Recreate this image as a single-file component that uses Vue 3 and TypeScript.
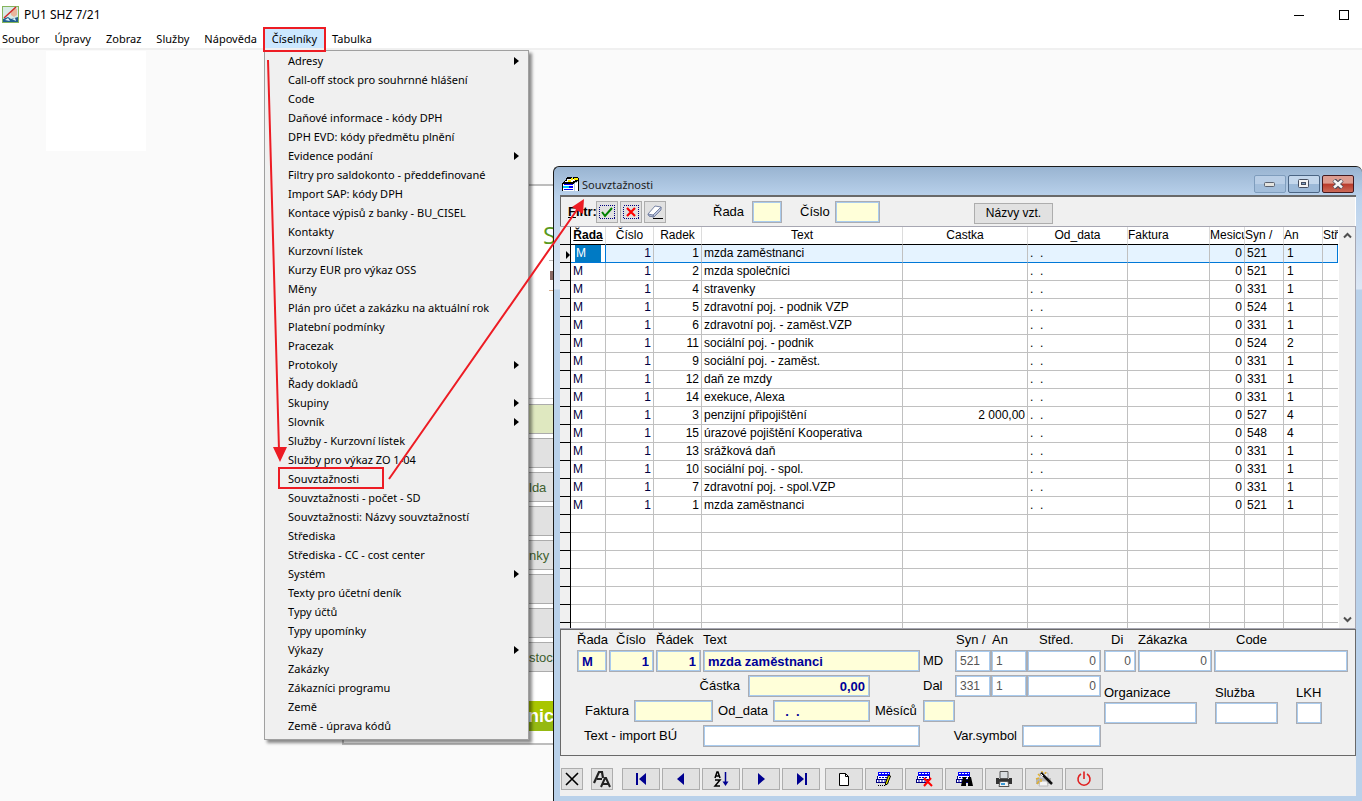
<script setup lang="ts">
import { ref } from 'vue'

interface MenuEntry { label: string; sub?: boolean }
interface Row { line: number; text: string; amount?: string; syn: string; an: string }

const menuBar: string[] = ['Soubor', 'Úpravy', 'Zobraz', 'Služby', 'Nápověda', 'Číselníky', 'Tabulka']
const openMenu = ref('Číselníky')

const entries: MenuEntry[] = [
  { label: 'Adresy', sub: true },
  { label: 'Call-off stock pro souhrnné hlášení' },
  { label: 'Code' },
  { label: 'Daňové informace - kódy DPH' },
  { label: 'DPH EVD: kódy předmětu plnění' },
  { label: 'Evidence podání', sub: true },
  { label: 'Filtry pro saldokonto - předdefinované' },
  { label: 'Import SAP: kódy DPH' },
  { label: 'Kontace výpisů z banky - BU_CISEL' },
  { label: 'Kontakty' },
  { label: 'Kurzovní lístek' },
  { label: 'Kurzy EUR pro výkaz OSS' },
  { label: 'Měny' },
  { label: 'Plán pro účet a zakázku na aktuální rok' },
  { label: 'Platební podmínky' },
  { label: 'Pracezak' },
  { label: 'Protokoly', sub: true },
  { label: 'Řady dokladů' },
  { label: 'Skupiny', sub: true },
  { label: 'Slovník', sub: true },
  { label: 'Služby - Kurzovní lístek' },
  { label: 'Služby pro výkaz ZO 1-04' },
  { label: 'Souvztažnosti' },
  { label: 'Souvztažnosti - počet - SD' },
  { label: 'Souvztažnosti: Názvy souvztažností' },
  { label: 'Střediska' },
  { label: 'Střediska - CC - cost center' },
  { label: 'Systém', sub: true },
  { label: 'Texty pro účetní deník' },
  { label: 'Typy účtů' },
  { label: 'Typy upomínky' },
  { label: 'Výkazy', sub: true },
  { label: 'Zakázky' },
  { label: 'Zákazníci programu' },
  { label: 'Země' },
  { label: 'Země - úprava kódů' },
]

const rows: Row[] = [
  { line: 1, text: 'mzda zaměstnanci', syn: '521', an: '1' },
  { line: 2, text: 'mzda společníci', syn: '521', an: '1' },
  { line: 4, text: 'stravenky', syn: '331', an: '1' },
  { line: 5, text: 'zdravotní poj. - podnik VZP', syn: '524', an: '1' },
  { line: 6, text: 'zdravotní poj. - zaměst.VZP', syn: '331', an: '1' },
  { line: 11, text: 'sociální poj. - podnik', syn: '524', an: '2' },
  { line: 9, text: 'sociální poj. - zaměst.', syn: '331', an: '1' },
  { line: 12, text: 'daň ze mzdy', syn: '331', an: '1' },
  { line: 14, text: 'exekuce, Alexa', syn: '331', an: '1' },
  { line: 3, text: 'penzijní připojištění', amount: '2 000,00', syn: '527', an: '4' },
  { line: 15, text: 'úrazové pojištění Kooperativa', syn: '548', an: '4' },
  { line: 13, text: 'srážková daň', syn: '331', an: '1' },
  { line: 10, text: 'sociální poj. - spol.', syn: '331', an: '1' },
  { line: 7, text: 'zdravotní poj. - spol.VZP', syn: '331', an: '1' },
  { line: 1, text: 'mzda zaměstnanci', syn: '521', an: '1' },
]
const blankRows = 7

const backButtons: string[] = ['', '', 'lda', '', 'nky', '', '', 'stoc']
</script>

<template>
  <div class="app">
    <header class="titlebar">
      <svg class="app-icon" width="17" height="17" viewBox="0 0 17 17" aria-hidden="true">
        <rect x="0.5" y="0.5" width="16" height="16" fill="#d7ebe6" stroke="#86b45c" />
        <path d="M1 13l5-2 3 2 7-2v5H1z" fill="#1f5f8f" />
        <path d="M9 5l3-3 3 1v6l-3 2-3-2z" fill="#e8b69c" />
        <path d="M3 14l3-2 2 3zM10 13l3-1 1 3z" fill="#e9f6fb" />
        <path d="M2 12L14 1" stroke="#cf2a2a" stroke-width="1.5" />
      </svg>
      <span class="app-name">PU1 SHZ 7/21</span>
      <button class="sys" type="button" aria-label="Minimalizovat">
        <svg width="10" height="10" viewBox="0 0 10 10"><path d="M0 5.5h10" stroke="#000" /></svg>
      </button>
      <button class="sys" type="button" aria-label="Maximalizovat">
        <svg width="10" height="10" viewBox="0 0 10 10"><rect x="0.5" y="0.5" width="9" height="9" fill="none" stroke="#000" /></svg>
      </button>
    </header>
    <nav class="menubar">
      <button v-for="m in menuBar" :key="m" type="button" :class="{ open: m === openMenu }" @click="openMenu = m">{{ m }}</button>
    </nav>

    <main class="desktop">
      <div class="blank"></div>

      <section class="back">
        <div class="back-head"><span class="back-title">S</span><span class="dash"></span><span class="chip"></span><span class="dash tan"></span></div>
        <div class="back-list">
          <button v-for="(b, i) in backButtons" :key="i" type="button" :class="{ first: i === 0 }">{{ b }}</button>
        </div>
        <div class="banner">nict</div>
      </section>

      <ul v-if="openMenu === 'Číselníky'" class="menu" role="menu">
        <li v-for="e in entries" :key="e.label" role="menuitem">
          <span>{{ e.label }}</span>
          <svg v-if="e.sub" width="5" height="8" viewBox="0 0 5 8" aria-hidden="true"><path d="M0 0l5 4-5 4z" fill="#000" /></svg>
        </li>
      </ul>

      <section class="win">
        <div class="win-title">
          <svg width="17" height="16" viewBox="0 0 17 16" aria-hidden="true" shape-rendering="crispEdges">
            <path d="M0 7h1V6h1V5h1V4h1V2h1V1h5v1h1V1h5v1h1v13h-1V5h-1v1h-2v1h-1v8H0z" fill="#000" />
            <path d="M3 5h2V3h10v1h-2v1h-2v1H3z" fill="#fff" />
            <path d="M6 4h3v2H6zM9 2h2v2H9zM12 2h4v2h-4z" fill="#ffee00" />
            <path d="M1 8h11v7H1zM13 7h2V6h1v9h-3z" fill="#fff" />
            <path d="M2 8h9v1H2zM2 13h9v1H2z" fill="#0000ff" />
            <path d="M1 10h6v2H1z" fill="#00c8ff" />
            <path d="M7 10h4v2H7z" fill="#0000ff" />
          </svg>
          <span class="win-name">Souvztažnosti</span>
          <button class="wb" type="button" aria-label="Minimalizovat okno">
            <svg width="12" height="6" viewBox="0 0 12 6"><rect x="0.5" y="1.5" width="10" height="4" rx="1" fill="#e4e4e0" stroke="#5b6270" /></svg>
          </button>
          <button class="wb strong" type="button" aria-label="Maximalizovat okno">
            <svg width="12" height="10" viewBox="0 0 12 10"><rect x="0.5" y="0.5" width="10" height="8" rx="1" fill="#f4f4f4" stroke="#464e60" /><rect x="3.5" y="3.5" width="4" height="2" fill="#7fa0c4" stroke="#464e60" /></svg>
          </button>
          <button class="wb close" type="button" aria-label="Zavřít okno">
            <svg width="12" height="10" viewBox="0 0 12 10"><path d="M2 1l8 8M10 1l-8 8" stroke="#4a4a58" stroke-width="4.500" /><path d="M2 1.500l8 7M10 1.500l-8 7" stroke="#f6f6f6" stroke-width="2.500" /></svg>
          </button>
        </div>

        <div class="win-body">
          <div class="filter">
            <strong class="flt"><u>F</u>iltr:</strong>
            <button class="sq" type="button" aria-label="Použít filtr">
              <svg width="16" height="16" viewBox="0 0 16 16"><rect x="0.5" y="1.500" width="15" height="13" fill="none" stroke="#000080" stroke-dasharray="1 1" shape-rendering="crispEdges" /><path d="M3 8l3 4 7-8" fill="none" stroke="#008000" stroke-width="2" /></svg>
            </button>
            <button class="sq" type="button" aria-label="Zrušit filtr">
              <svg width="16" height="16" viewBox="0 0 16 16"><rect x="0.5" y="1.500" width="15" height="13" fill="none" stroke="#000080" stroke-dasharray="1 1" shape-rendering="crispEdges" /><path d="M4 4l8 8M12 4l-8 8" stroke="#ff0000" stroke-width="2.200" /></svg>
            </button>
            <button class="sq" type="button" aria-label="Vymazat filtr">
              <svg width="18" height="16" viewBox="0 0 18 16"><path d="M2 10l7-8 6 1-1 4-6 6-5-1z" fill="#fff" stroke="#7884a4" /><path d="M2 10l5 1 1 2-5-1zM7 11l8-8v3l-7 7z" fill="#b8c2dc" stroke="#7884a4" /><path d="M7 14.500h10" stroke="#000" /></svg>
            </button>
            <label class="f-rada" for="f-rada">Řada</label><input id="f-rada" class="in y w30">
            <label class="f-cislo" for="f-cislo">Číslo</label><input id="f-cislo" class="in y w45">
            <button class="names" type="button">Názvy vzt.</button>
          </div>

          <div class="grid">
            <table>
              <colgroup>
                <col class="c-ind"><col class="c-rada"><col class="c-48"><col class="c-48"><col>
                <col class="c-castka"><col class="c-od"><col class="c-fak"><col class="c-mes"><col class="c-39"><col class="c-39"><col class="c-str">
              </colgroup>
              <thead>
                <tr>
                  <th class="ind"></th><th class="sorted">Řada</th><th>Číslo</th><th>Radek</th><th>Text</th><th>Castka</th><th>Od_data</th>
                  <th class="l">Faktura</th><th class="l">Mesicu</th><th class="l">Syn /</th><th class="l">An</th><th class="l">Stř.</th>
                </tr>
              </thead>
              <tbody>
                <tr v-for="(r, i) in rows" :key="i" :class="{ cur: i === 0 }">
                  <td class="ind"><svg v-if="i === 0" width="4" height="8" viewBox="0 0 4 8"><path d="M0 0l4 4-4 4z" fill="#000" /></svg></td>
                  <td class="navy"><span>M</span></td>
                  <td class="r navy">1</td>
                  <td class="r">{{ r.line }}</td>
                  <td>{{ r.text }}</td>
                  <td class="r">{{ r.amount }}</td>
                  <td class="date">.&nbsp; .</td>
                  <td></td>
                  <td class="r">0</td>
                  <td>{{ r.syn }}</td>
                  <td class="an">{{ r.an }}</td>
                  <td></td>
                </tr>
                <tr v-for="n in blankRows" :key="'b' + n"><td class="ind"></td><td v-for="c in 11" :key="c"></td></tr>
              </tbody>
            </table>
            <div class="scroll">
              <button type="button" aria-label="Nahoru"><svg width="9" height="7" viewBox="0 0 9 7"><path d="M1 5.500l3.500-3.500 3.500 3.500" fill="none" stroke="#505050" stroke-width="2" /></svg></button>
              <button type="button" aria-label="Dolů"><svg width="9" height="7" viewBox="0 0 9 7"><path d="M1 1.500l3.500 3.500 3.500-3.500" fill="none" stroke="#505050" stroke-width="2" /></svg></button>
            </div>
          </div>

          <form class="form" @submit.prevent>
            <div class="part">
              <div class="line heads">
                <label class="w30" for="i-rada">Řada</label><label class="w45 pad" for="i-cislo">Číslo</label><label class="w45" for="i-radek">Řádek</label><label for="i-text">Text</label>
              </div>
              <div class="line">
                <input id="i-rada" class="in y w30" value="M"><input id="i-cislo" class="in y w45 right" value="1"><input id="i-radek" class="in y w45 right" value="1"><input id="i-text" class="in y w217" value="mzda zaměstnanci">
              </div>
              <div class="line amount">
                <label for="i-castka">Částka</label><input id="i-castka" class="in y w122 right" value="0,00">
              </div>
              <div class="line more">
                <label for="i-faktura">Faktura</label><input id="i-faktura" class="in y w79">
                <label for="i-od">Od_data</label><input id="i-od" class="in y w97" value="  .  .">
                <label for="i-mes">Měsíců</label>
              </div>
              <div class="line imp">
                <label for="i-import">Text - import BÚ</label><input id="i-import" class="in w217">
              </div>
            </div>

            <div class="part">
              <div class="line heads acc">
                <label class="syn" for="i-md-syn">Syn /</label><label class="w36" for="i-md-an">An</label><label class="str" for="i-md-str">Střed.</label>
              </div>
              <div class="line tight">
                <span class="side">MD</span><input id="i-md-syn" class="in w36" value="521"><input id="i-md-an" class="in w36" value="1"><input id="i-md-str" class="in w74 right" value="0">
              </div>
              <div class="line tight">
                <span class="side">Dal</span><input class="in w36" aria-label="Dal Syn" value="331"><input class="in w36" aria-label="Dal An" value="1"><input class="in w74 right" aria-label="Dal Střed." value="0">
              </div>
              <div class="line"><input id="i-mes" class="in y w32"></div>
              <div class="line end"><label for="i-var">Var.symbol</label><input id="i-var" class="in w79"></div>
            </div>

            <div class="part wide">
              <div class="line heads">
                <label class="w32 pad" for="i-di">Di</label><label class="w74" for="i-zak">Zákazka</label><label class="code" for="i-code">Code</label>
              </div>
              <div class="line">
                <input id="i-di" class="in w32 right" value="0"><input id="i-zak" class="in w74 right" value="0"><input id="i-code" class="in fill">
              </div>
              <div class="stack">
                <div><label for="i-org">Organizace</label><input id="i-org" class="in w93"></div>
                <div><label for="i-slu">Služba</label><input id="i-slu" class="in w63"></div>
                <div><label for="i-lkh">LKH</label><input id="i-lkh" class="in w26"></div>
              </div>
            </div>
          </form>

          <div class="tools">
            <div class="set spaced">
              <button class="sq" type="button" aria-label="Zavřít"><svg width="16" height="16" viewBox="0 0 16 16"><path d="M2 2l12 12M14 2L2 14" fill="none" stroke="#000" stroke-width="1.600" /></svg></button>
              <button class="sq" type="button" aria-label="Písmo"><svg width="18" height="18" viewBox="0 0 18 18"><path d="M1 13L6 2h3l1 6" fill="none" stroke="#222" stroke-width="2.200" /><path d="M4 9h5" stroke="#222" stroke-width="2" /><path d="M8 17l4-9h1l4 9M10 14h5" fill="none" stroke="#222" stroke-width="2" /></svg></button>
            </div>
            <div class="set">
              <button class="tb" type="button" aria-label="První"><svg width="16" height="16" viewBox="0 0 16 16"><path d="M3 2h2v12H3zM13 2v12L6 8z" fill="#000090" /></svg></button>
              <button class="tb" type="button" aria-label="Předchozí"><svg width="16" height="16" viewBox="0 0 16 16"><path d="M11 2v12L4 8z" fill="#000090" /></svg></button>
              <button class="tb" type="button" aria-label="Seřadit"><svg width="18" height="18" viewBox="0 0 18 18"><path d="M3 8l2-6h1l2 6M4 6h3M3 10h5L3 16h5" fill="none" stroke="#000" stroke-width="1.500" /><path d="M13.500 2v12" stroke="#000090" stroke-width="1.500" /><path d="M10.500 11.500h6l-3 4.500z" fill="#000090" /></svg></button>
              <button class="tb" type="button" aria-label="Další"><svg width="16" height="16" viewBox="0 0 16 16"><path d="M5 2v12l7-6z" fill="#000090" /></svg></button>
              <button class="tb" type="button" aria-label="Poslední"><svg width="16" height="16" viewBox="0 0 16 16"><path d="M12 2h2v12h-2zM4 2v12l7-6z" fill="#000090" /></svg></button>
            </div>
            <div class="set">
              <button class="tb" type="button" aria-label="Nový"><svg width="14" height="16" viewBox="0 0 14 16"><path d="M2.500 2.500h6l3 3v9h-9z" fill="#fff" stroke="#000" /><path d="M8.500 2.500v3h3" fill="none" stroke="#000" /></svg></button>
              <button v-for="k in ['Upravit', 'Smazat', 'Hledat']" :key="k" class="tb" type="button" :aria-label="k">
                <svg width="18" height="16" viewBox="0 0 18 16">
                  <path d="M3 1h12v4H3z" fill="#0000ff" /><path d="M4 2.500h10" stroke="#fff" stroke-dasharray="2 1" />
                  <path d="M3 5h12v6H3zM2 7h12v4H2z" fill="#fff" />
                  <path d="M2.500 5v3M14.500 5v3M1.500 8v3M13.500 8v3M2 8.500h12" stroke="#000080" />
                  <path d="M4 6.500h9M3 10h9" stroke="#0000b0" stroke-dasharray="2 1" /><path d="M1 11.500h12" stroke="#000080" />
                  <template v-if="k === 'Upravit'"><path d="M10.500 12l3-8 2 1-3 8-2 1z" fill="#e8e800" stroke="#000" /><path d="M3 14.500h8" stroke="#000" stroke-dasharray="1 1" /></template>
                  <path v-else-if="k === 'Smazat'" d="M9 7l8 8M16 7l-7 8" stroke="#ff0000" stroke-width="2" />
                  <path v-else d="M8 6h3v3h2V6h3l2 9h-5v-4h-2v4H6z" fill="#000" />
                </svg>
              </button>
              <button class="tb" type="button" aria-label="Tisk"><svg width="18" height="16" viewBox="0 0 18 16"><path d="M5 0.500h8v7H5z" fill="#d9dde0" stroke="#555" /><path d="M1 7h3v1h10V7h3v6H1z" fill="#333" /><path d="M5 10.500h8l1 5H4z" fill="#f2f2f2" stroke="#555" /><path d="M6 12h4v2H6z" fill="#3a9ad8" /></svg></button>
              <button class="tb" type="button" aria-label="Návrh tisku"><svg width="18" height="16" viewBox="0 0 18 16"><path d="M5 2h8v5H5z" fill="#eee" stroke="#bbb" /><path d="M1 7h15v6H1z" fill="#b4b4b4" /><path d="M5 10h7l1 5H4z" fill="#f5f5f5" stroke="#bbb" /><path d="M3 3l2 2M7 0v2M1 8l3-1M2 13l2-3M6 8v3M11 1l-1 2" stroke="#e0b030" stroke-width="1.500" /><path d="M6 2l11 11" stroke="#111" stroke-width="2.500" /><path d="M6 3l2 2" stroke="#fff" /></svg></button>
              <button class="tb" type="button" aria-label="Konec"><svg width="16" height="16" viewBox="0 0 16 16"><path d="M5 3a6 6 0 1 0 6 0M8 0.500V8" fill="none" stroke="#e02020" stroke-width="1.600" /></svg></button>
            </div>
          </div>
        </div>
      </section>
    </main>

    <svg class="notes" width="600" height="500" viewBox="0 0 600 500" aria-hidden="true">
      <g fill="none" stroke="#ed1c24" stroke-width="2">
        <rect x="264" y="28" width="61" height="23" />
        <rect x="279" y="468" width="104" height="20" />
        <path d="M268 60l11 390M389 479L579 207" />
      </g>
      <path d="M273 447h14l-7 15zM584 199l-12 8 11 7z" fill="#ed1c24" />
    </svg>
  </div>
</template>

<style>
body { margin: 0; }
</style>

<style scoped>
* { box-sizing: border-box; }
.app { position: relative; min-height: 100vh; display: flex; flex-direction: column; overflow: hidden; background: #fafafa; color: #000; font: 11px "Noto Sans", "Open Sans", sans-serif; }
button { font: inherit; color: inherit; padding: 0; margin: 0; border: 0; background: none; border-radius: 0; }
svg { display: block; flex: none; }

.titlebar { display: flex; align-items: center; height: 29px; padding: 0 13px 0 2px; background: #fff; }
.app-name { margin-left: 5px; flex: 1; font-size: 12px; }
.sys { width: 10px; height: 10px; margin-left: 35px; }
.menubar { display: flex; gap: 15px; height: 21px; padding-left: 2px; background: #fff; border-bottom: 2px solid #f0f0f0; }
.menubar button.open { background: #cce8ff; margin: 0 -7px; padding: 0 7px; }

.desktop { position: relative; flex: 1; }
.blank { width: 100px; height: 100px; margin: 1px 0 0 46px; background: #fff; }

.back { position: absolute; left: 342px; right: 200px; top: 134px; height: 561px; background: #fff; border: 2px solid #bdbdbd; padding: 0 6px 0 184px; }
.back-head { display: flex; flex-direction: column; align-items: flex-start; gap: 10px; height: 213px; padding: 34px 0 0 15px; border-bottom: 1px solid #ccc; }
.back-title { font: 24px/30px "Open Sans", sans-serif; color: #5a9a1e; }
.dash { width: 20px; height: 1px; margin-left: 6px; background: #bbb; }
.chip { width: 20px; height: 9px; margin-left: 7px; background: #8a6a64; }
.dash.tan { background: #d8b090; }
.back-list { display: flex; flex-direction: column; gap: 4px; padding-top: 5px; }
.back-list button { height: 30px; border: 1px solid #acacac; background: #e1e1e1; text-align: left; color: #40602f; font: 13px "Liberation Sans", sans-serif; }
.back-list button.first { background: #dfe8c0; }
.banner { margin-top: 29px; height: 30px; background: linear-gradient(#a9c600 50%, #95b912 50%); color: #fff; font: bold 18px/30px "Liberation Sans", sans-serif; }

.menu { position: absolute; left: 264px; top: 0; width: 265px; margin: 0; padding: 0 9px 4px 23px; list-style: none; background: #f0f0f0; border: 1px solid #a0a0a0; box-shadow: 3px 3px 3px rgba(0, 0, 0, 0.45); }
.menu li { display: flex; align-items: center; justify-content: space-between; height: 19px; }

.win { position: absolute; left: 553px; right: 0; top: 116px; bottom: 0; display: flex; flex-direction: column; padding: 0 6px 5px; border: solid #1a1a1a; border-width: 1px 0 0 1px; border-radius: 6px 6px 0 0; background: linear-gradient(#99b4d1, #bad2ec 30px, #dce7f5 122px, #b9d1ea 123px); }
.win-title { display: flex; align-items: center; height: 28px; gap: 2px; padding: 6px 2px 0 2px; color: #222; }
.win-name { flex: 1; padding-left: 1px; }
.wb { display: flex; align-items: center; justify-content: center; width: 32px; height: 18px; border: 1px solid #7f9dbd; border-radius: 2px; background: linear-gradient(#b9cee6 50%, #a3bedb 50%); }
.wb.strong { border-color: #4b6584; background: linear-gradient(#c4d7ec 50%, #9cb9d8 50%); }
.wb.close { border-color: #431a20; background: linear-gradient(#dd9c90 45%, #b8392a 50%, #cc6a58); }

.win-body { flex: 1; min-height: 0; display: flex; flex-direction: column; border-top: 2px solid #696969; background: #f0f0f0; font: 13px "Liberation Sans", Arial, sans-serif; }
.filter { display: flex; align-items: center; gap: 2px; height: 29px; padding-left: 7px; border-left: 1px solid #696969; border-right: 1px solid #fff; }
.flt { width: 26px; }
.sq { display: flex; align-items: center; justify-content: center; width: 22px; height: 22px; border: 1px solid #adadad; background: #e1e1e1; }
.in { height: 22px; margin: 0; padding: 0 4px; border: 1px solid #abadb3; box-shadow: inset 0 0 0 1px #a9cbee; background: #fff; border-radius: 0; outline: 0; font: 12px "Liberation Sans", Arial, sans-serif; color: #555; white-space: pre; }
.in.y { background: #ffffd9; color: #000099; font-weight: bold; font-size: 13px; }
.right { text-align: right; }
.w26 { width: 26px; padding: 0; } .w30 { width: 30px; } .w32 { width: 32px; } .w36 { width: 36px; } .w45 { width: 45px; }
.w63 { width: 63px; } .w74 { width: 74px; } .w79 { width: 79px; } .w93 { width: 93px; } .w97 { width: 97px; } .w122 { width: 122px; } .w217 { width: 217px; }
.f-rada { width: 37px; margin-left: 45px; }
.f-cislo { width: 33px; margin-left: 16px; }
.names { width: 79px; height: 21px; margin: 3px 0 0 92px; border: 1px solid #adadad; background: #e1e1e1; font-size: 12px; }

.grid { flex: 1; min-height: 0; display: flex; overflow: hidden; border: 1px solid #a7a7b2; border-width: 1px 1px 1px 0; background: #fff; }
table { flex: 1; align-self: flex-start; table-layout: fixed; border-spacing: 0; width: 0; font-size: 12px; line-height: 17px; }
.c-ind { width: 11px; } .c-rada { width: 35px; } .c-48 { width: 48px; } .c-castka { width: 125px; } .c-od { width: 100px; }
.c-fak { width: 82px; } .c-mes { width: 35px; } .c-39 { width: 39px; } .c-str { width: 15px; }
th, td { height: 18px; padding: 0 2px; border-right: 1px solid #c0c0c0; border-bottom: 1px solid #c0c0c0; overflow: hidden; white-space: nowrap; text-align: left; }
th { padding: 0 1px; font-weight: normal; text-align: center; border-bottom-color: #000; border-right-color: #dcdcdc; }
th.l { text-align: left; padding: 0; }
th.sorted { font-weight: bold; text-decoration: underline; }
th:last-child, td:last-child { border-right: 0; }
.ind { padding: 0; background: #f0f0f0; border-right: 1px solid #000; border-bottom-color: #000; }
td.ind svg { margin: 2px 0 0 6px; }
td.r { text-align: right; }
td.an { padding-left: 3px; }
.navy { color: #000040; }
.cur td:not(.ind) { background: #e5f3ff; border-bottom-color: #0078d7; }
.cur td:last-child { border-right: 1px solid #0078d7; }
.cur td:nth-child(2) { padding: 0 1px; border-right-color: #0078d7; background: #fff; }
.cur td:nth-child(2) span { display: block; margin: 0 3px; padding-left: 1px; background: #007ac4; color: #fff; }
.scroll { display: flex; flex-direction: column; justify-content: space-between; width: 16px; margin-left: 1px; background: #f0f0f0; }
.scroll button { display: flex; justify-content: center; align-items: center; height: 17px; }

.form { display: flex; align-items: flex-start; gap: 3px; height: 127px; padding: 2px 7px 0 16px; border: 1px solid #696969; line-height: 16px; }
.part { display: flex; flex-direction: column; gap: 3px; }
.part.wide { flex: 1; min-width: 0; }
.line { display: flex; align-items: center; gap: 2px; height: 22px; white-space: nowrap; }
.heads { height: 15px; }
.pad { padding-left: 7px; }
.amount { justify-content: flex-end; gap: 8px; padding-right: 50px; }
.more { gap: 5px; padding-left: 8px; }
.imp { justify-content: space-between; padding-left: 7px; }
.tight { gap: 0; }
.side { width: 32px; }
.acc { padding-left: 33px; gap: 0; }
.syn { width: 36px; }
.str { padding-left: 11px; }
.end { justify-content: flex-end; gap: 5px; }
.code { padding-left: 22px; }
.fill { flex: 1; min-width: 0; width: 0; }
.stack { display: flex; gap: 18px; padding-top: 10px; }
.stack div { display: flex; flex-direction: column; gap: 1px; }

.tools { display: flex; gap: 5px; padding: 12px 0 6px 1px; }
.set { display: flex; gap: 2px; }
.spaced { gap: 8px; margin-right: 4px; }
.tb { display: flex; align-items: center; justify-content: center; width: 38px; height: 22px; border: 1px solid #adadad; background: #e1e1e1; }

.notes { position: absolute; left: 0; top: 0; pointer-events: none; }
</style>
